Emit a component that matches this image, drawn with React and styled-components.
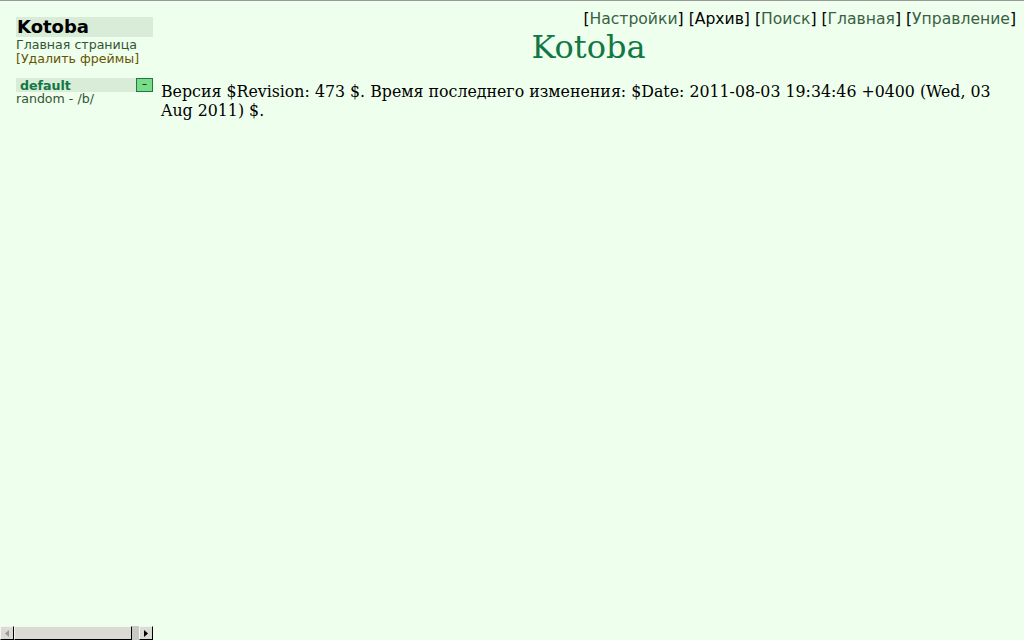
import React from "react";
import styled, { createGlobalStyle } from "styled-components";

const Global = createGlobalStyle`
  html, body {
    margin: 0;
    padding: 0;
    background: #eeffee;
    overflow: hidden;
  }
`;

const Frameset = styled.div`
  display: flex;
  width: 1024px;
  height: 640px;
  border-top: 1px solid #999999;
  box-sizing: border-box;
  background: #eeffee;
`;

const LeftFrame = styled.div`
  width: 153px;
  display: flex;
  flex-direction: column;
  flex-shrink: 0;
`;

const LeftBody = styled.div`
  flex: 1;
  padding: 16px 0 0 16px;
  font-family: "DejaVu Sans", sans-serif;
  font-size: 12.6px;
`;

const Logo = styled.div`
  background: #d8ecd8;
  font-size: 18px;
  font-weight: bold;
  color: #000;
  line-height: 20px;
  padding-left: 1px;
  margin-bottom: 1px;
`;

const SideLink = styled.div`
  color: ${(p) => p.color || "#335533"};
  line-height: 14px;
`;

const Section = styled.div`
  margin-top: 12px;
`;

const BoardHead = styled.div`
  display: flex;
  align-items: center;
  justify-content: space-between;
  background: #d8ecd8;
  height: 14px;
  font-weight: bold;
  color: #117744;
  padding-left: 4px;
`;

const Toggle = styled.div`
  width: 17px;
  height: 14px;
  box-sizing: border-box;
  border: 1px solid #227744;
  background: #77dd88;
  color: #000;
  font-size: 10px;
  line-height: 10px;
  text-align: center;
  font-weight: normal;
`;

const Scrollbar = styled.div`
  display: flex;
  height: 14px;
  background: #c8c8c4;
`;

const ArrowBtn = styled.div`
  width: 14px;
  height: 14px;
  box-sizing: border-box;
  background: #dcdad5;
  border-right: 1px solid #000;
  border-bottom: 1px solid #000;
  border-top: 1px solid #f4f4f2;
  border-left: 1px solid #f4f4f2;
  display: flex;
  align-items: center;
  justify-content: center;
`;

const Thumb = styled.div`
  width: 118px;
  height: 14px;
  box-sizing: border-box;
  background: #dcdad5;
  border-right: 1px solid #000;
  border-bottom: 1px solid #000;
  border-top: 1px solid #f4f4f2;
  border-left: 1px solid #f4f4f2;
`;

const Track = styled.div`
  flex: 1;
`;

const RightFrame = styled.div`
  flex: 1;
  padding: 8px 8px 0 8px;
`;

const Menu = styled.div`
  text-align: right;
  font-family: "DejaVu Sans", sans-serif;
  font-size: 15.6px;
  color: #000;
  line-height: 20px;
`;

const MenuLink = styled.span`
  color: ${(p) => (p.$active ? "#000" : "#3a5f44")};
`;

const Title = styled.h1`
  margin: -2px 0 0 0;
  text-align: center;
  font-family: "DejaVu Serif", serif;
  font-weight: normal;
  font-size: 32px;
  line-height: 40px;
  color: #117744;
`;

const Version = styled.p`
  margin: 15px 0 0 0;
  font-family: "DejaVu Serif", serif;
  font-size: 15.8px;
  line-height: 19px;
  color: #000;
`;

const items = [
  ["Настройки"],
  ["Архив", true],
  ["Поиск"],
  ["Главная"],
  ["Управление"],
];

export default function App() {
  return (
    <>
      <Global />
      <Frameset>
        <LeftFrame>
          <LeftBody>
            <Logo>Kotoba</Logo>
            <SideLink>Главная страница</SideLink>
            <SideLink color="#665500">[Удалить фреймы]</SideLink>
            <Section>
              <BoardHead>
                default
                <Toggle>–</Toggle>
              </BoardHead>
              <SideLink>random - /b/</SideLink>
            </Section>
          </LeftBody>
          <Scrollbar>
            <ArrowBtn>
              <svg width="4" height="7" viewBox="0 0 4 7">
                <path d="M4 0 L0 3.5 L4 7 Z" fill="#999" />
              </svg>
            </ArrowBtn>
            <Thumb />
            <Track />
            <ArrowBtn>
              <svg width="4" height="7" viewBox="0 0 4 7">
                <path d="M0 0 L4 3.5 L0 7 Z" fill="#000" />
              </svg>
            </ArrowBtn>
          </Scrollbar>
        </LeftFrame>
        <RightFrame>
          <Menu>
            {items.map(([t, a], i) => (
              <React.Fragment key={t}>
                {i > 0 && " "}[<MenuLink $active={a}>{t}</MenuLink>]
              </React.Fragment>
            ))}
          </Menu>
          <Title>Kotoba</Title>
          <Version>
            Версия $Revision: 473 $. Время последнего изменения: $Date:
            2011-08-03 19:34:46 +0400 (Wed, 03 Aug 2011) $.
          </Version>
        </RightFrame>
      </Frameset>
    </>
  );
}
